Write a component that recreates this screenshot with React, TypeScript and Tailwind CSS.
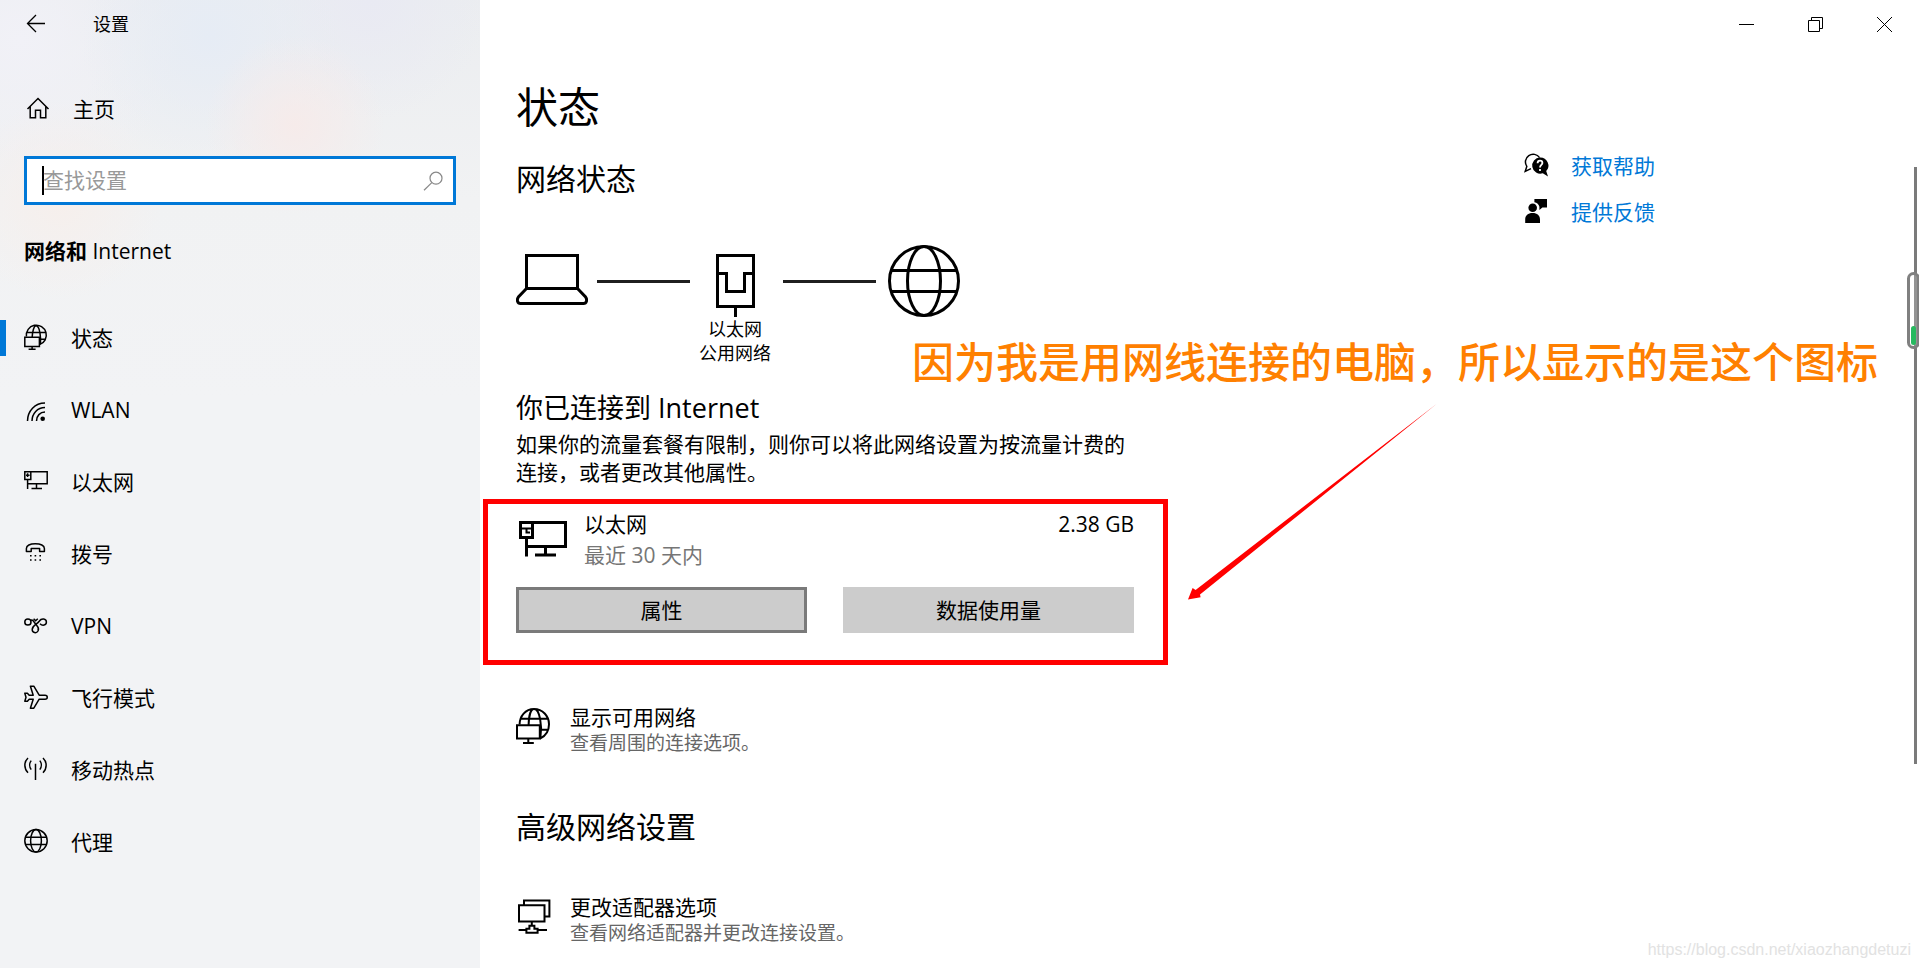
import React from 'react';

interface IconProps {
  className?: string;
}

const stroke = { fill: 'none', stroke: 'currentColor', strokeWidth: 1.5 } as const;

const BackIcon: React.FC<IconProps> = ({ className }) => (
  <svg viewBox="0 0 20 20" className={className} {...stroke} strokeWidth={1.3}>
    <path d="M19 9.5H1.5M10 1L1.5 9.5L10 18" />
  </svg>
);

const HomeIcon: React.FC<IconProps> = ({ className }) => (
  <svg viewBox="0 0 24 24" className={className} {...stroke}>
    <path d="M1.5 12L12 1.5L22.5 12M4.2 9.5V20.8H9.5V13.2H14.5V20.8H19.8V9.5" />
  </svg>
);

const SearchIcon: React.FC<IconProps> = ({ className }) => (
  <svg viewBox="0 0 20 20" className={className} {...stroke} strokeWidth={1.2}>
    <circle cx="13" cy="7.2" r="6" />
    <path d="M8.8 11.6L1 19.2" />
  </svg>
);

const GlobeMonitorIcon: React.FC<IconProps> = ({ className }) => (
  <svg viewBox="0 0 24 24" className={className} {...stroke}>
    <path d="M2.4 10.5A10 10 0 1 1 15.6 18.6M3 6.6H21.6M16 13.3H21.8M8.2 11C8.4 6 9.8 -0.2 12 -0.2M16.4 18C17 13 16.2 -0.2 12 -0.2" />
    <path d="M0.8 11.2H15.4V20.6H0.8ZM8.1 20.6V23.2M4.6 23.2H11.6" />
  </svg>
);

const WlanIcon: React.FC<IconProps> = ({ className }) => (
  <svg viewBox="0 0 24 24" className={className} {...stroke}>
    <path d="M3.5 23C3.5 13 11 5 21 5M8 23C8 15.5 13.5 9.5 21 9.5M12.5 23C12.5 18 16 14 21 14" />
    <circle cx="18.7" cy="20.7" r="2.3" fill="currentColor" stroke="none" />
  </svg>
);

const EthernetIcon: React.FC<IconProps> = ({ className }) => (
  <svg viewBox="0 0 24 24" className={className} {...stroke}>
    <path d="M0.8 1.8H6.8V9.6H0.8ZM6.8 1.8H23.2V13.8H3.6M3.6 9.6V19M2 5.2H5.6M3.6 3.2V7M12.5 13.8V18.2M7.5 18.4H18" />
  </svg>
);

const DialIcon: React.FC<IconProps> = ({ className }) => (
  <svg viewBox="0 0 24 24" className={className} {...stroke}>
    <path
      d="M2.4 9.4V6.6C2.4 3.5 6 1.8 11.3 1.8S20.4 3.5 20.4 6.6V9.4H15.6V6.4H7.2V9.4Z"
      strokeLinejoin="round"
    />
    <path d="M6 13.7H7.6M10.6 13.7H12.2M15.4 13.7H17M6 18H7.6M10.6 18H12.2M15.4 18H17" />
  </svg>
);

const VpnIcon: React.FC<IconProps> = ({ className }) => (
  <svg viewBox="0 0 24 24" className={className} {...stroke}>
    <circle cx="3.9" cy="8" r="3.1" />
    <path d="M6.6 6.4C9 4.6 10.4 9.2 12.6 11.2C14.8 13.4 15 15 14 17C12.4 19.8 8.2 18.8 8.2 15.4C8.2 11.6 13 10.6 15.4 7C17.4 3.8 22.4 4.4 22.4 8C22.4 11.4 18.4 12.2 16 9.8" />
    <path d="M9.6 4.8L11.6 6.8L13.8 4.8" />
  </svg>
);

const AirplaneIcon: React.FC<IconProps> = ({ className }) => (
  <svg viewBox="0 0 24 24" className={className} {...stroke} strokeLinejoin="round">
    <path d="M0.8 7.2H3.4L5.2 9.2H9.2L6.4 0.2H9.8L15.2 9.2H21C24 9.2 24 13.2 21 13.2H15.2L9.8 22.2H6.4L9.2 13.2H5.2L3.4 15.2H0.8L2 11.2Z" />
  </svg>
);

const HotspotIcon: React.FC<IconProps> = ({ className }) => (
  <svg viewBox="0 0 24 24" className={className} {...stroke}>
    <path d="M11.5 5.8V22M7.2 2.6C5.2 5.2 5.2 9 7.2 11.6M15.8 2.6C17.8 5.2 17.8 9 15.8 11.6M4 0C-0.2 4 -0.2 10.6 4 14.8M19 0C23.2 4 23.2 10.6 19 14.8" />
  </svg>
);

const ProxyIcon: React.FC<IconProps> = ({ className }) => (
  <svg viewBox="0 0 24 24" className={className} {...stroke}>
    <circle cx="12" cy="10.8" r="11.2" />
    <ellipse cx="12" cy="10.8" rx="5.4" ry="11.2" />
    <path d="M1.4 7.2H22.6M1.4 14.6H22.6" />
  </svg>
);

const GlobeIcon: React.FC<IconProps> = ({ className }) => (
  <svg viewBox="0 0 72 72" className={className} {...stroke} strokeWidth={3}>
    <circle cx="36" cy="36" r="34.5" />
    <ellipse cx="36" cy="36" rx="16.5" ry="34.5" />
    <path d="M3 25.5H69M3 46.5H69" />
  </svg>
);

const LaptopIcon: React.FC<IconProps> = ({ className }) => (
  <svg viewBox="0 0 72 72" className={className} {...stroke} strokeWidth={3}>
    <path d="M10.5 43.5V10.5H61.5V43.5Z" />
    <path d="M10.5 43.5L2.4 52C0.4 55 1.5 58.5 4.5 58.5H67.5C70.5 58.5 71.6 55 69.6 52L61.5 43.5" />
  </svg>
);

const EthernetPortIcon: React.FC<IconProps> = ({ className }) => (
  <svg viewBox="0 0 72 72" className={className} {...stroke} strokeWidth={3}>
    <path d="M18.5 10.5H54.5V61.5H18.5ZM18.5 28.5H27.5V46.5H45.5V28.5H54.5M36.5 61.5V72" />
  </svg>
);

const EthernetLargeIcon: React.FC<IconProps> = ({ className }) => (
  <svg viewBox="0 0 54 40" className={className} {...stroke} strokeWidth={3}>
    <path d="M4.5 4.5H16.5V19.5H4.5ZM16.5 4.5H49.5V28.5H11M10.5 19.5V38.5M29.5 28.5V37M19 37H40" />
    <path d="M6 10.5H15M10.5 10.5V14.5H14" strokeWidth={2} />
  </svg>
);

const NetworksIcon: React.FC<IconProps> = ({ className }) => (
  <svg viewBox="0 0 36 36" className={className} {...stroke} strokeWidth={2}>
    <path d="M3.6 16.5C3.6 8 9.5 1 18 1C26.5 1 33 8 33 16.2C33 23 29.5 28 24 30.6M4.6 10.8H31.4M24.5 21.8H31.6M12.6 17C12.8 8.5 14.6 1 18 1M24.4 29.4C26.4 18 23.8 1 18 1" />
    <path d="M1 17.2H23.8V30.4H1ZM12.3 30.4V35M7 35H17.8" />
  </svg>
);

const AdapterIcon: React.FC<IconProps> = ({ className }) => (
  <svg viewBox="0 0 36 36" className={className} {...stroke} strokeWidth={2}>
    <path d="M3 7.2H28.5V23.4H3ZM8 6.8V2.6H33.4V18.6H29M15.8 23.4V27M2.6 32H10M22 32H31" />
    <path d="M10.4 30.8H13.4V27.8H18.4V30.8H21.6V34.8H10.4Z" />
  </svg>
);

const HelpIcon: React.FC<IconProps> = ({ className }) => (
  <svg viewBox="0 0 24 24" className={className}>
    <path d="M15.6 5.6A7.6 7.6 0 1 0 2.8 14.4L1.2 19.4L7 16.6" {...stroke} />
    <path d="M16 5.4A8.1 8.1 0 1 0 18.8 21.2L24 24.4L22.2 19A8.1 8.1 0 0 0 16 5.4Z" fill="currentColor" />
    <path d="M13.6 11.2C13.6 7.8 18.4 8 18.4 11C18.4 12.8 16 13 16 15.4M16 17V19" {...stroke} stroke="#fff" strokeWidth={1.8} />
  </svg>
);

const FeedbackIcon: React.FC<IconProps> = ({ className }) => (
  <svg viewBox="0 0 24 24" className={className} fill="currentColor">
    <circle cx="8.7" cy="9.7" r="4.3" />
    <path d="M1.2 25V21.4C1.2 17.6 4 15 8.6 15S16 17.6 16 21.4V25ZM10.4 1H23V9.4H18.4L15.4 12V8.8C15 6.4 13 4.6 10.4 4.2Z" />
  </svg>
);

interface NavItem {
  label: string;
  icon: React.FC<IconProps>;
  active?: boolean;
}

const navItems: NavItem[] = [
  { label: '状态', icon: GlobeMonitorIcon, active: true },
  { label: 'WLAN', icon: WlanIcon },
  { label: '以太网', icon: EthernetIcon },
  { label: '拨号', icon: DialIcon },
  { label: 'VPN', icon: VpnIcon },
  { label: '飞行模式', icon: AirplaneIcon },
  { label: '移动热点', icon: HotspotIcon },
  { label: '代理', icon: ProxyIcon },
];

const Sidebar: React.FC = () => (
  <aside className="w-[480px] shrink-0 bg-[#f2f3f5] bg-[radial-gradient(circle_at_295px_125px,#f6ebea_0,transparent_90px),radial-gradient(circle_at_210px_35px,#e6ecf5_0,transparent_130px),radial-gradient(circle_at_60px_200px,#f6efec_0,transparent_100px),radial-gradient(circle_at_370px_0,#e9eaf3_0,transparent_120px),radial-gradient(circle_at_20px_40px,#f1f1f7_0,transparent_160px),linear-gradient(to_bottom,#ebedf0_0,#f1f2f3_200px,#f2f3f5_400px)]">
    <header className="flex h-12 items-center pl-[26px]">
      <button aria-label="返回">
        <BackIcon className="size-5" />
      </button>
      <span className="ml-[47px] text-lg leading-6">设置</span>
    </header>
    <a href="#home" className="mt-[37px] flex h-12 items-center gap-[23px] pl-[26px]">
      <HomeIcon className="size-6" />
      <span>主页</span>
    </a>
    <label className="mx-6 mt-[23px] flex h-[49px] items-center border-3 border-[#0078d7] bg-white pr-2.5 pl-[15px]">
      <span className="h-[29px] w-0.5 bg-black" />
      <input
        type="text"
        aria-label="查找设置"
        placeholder="查找设置"
        className="-ml-px min-w-0 flex-1 bg-transparent pb-0.5 outline-none placeholder:text-[#999]"
      />
      <SearchIcon className="size-5 text-[#888]" />
    </label>
    <h2 className="mt-8 pl-6 font-bold">
      网络和 <span className="font-medium">Internet</span>
    </h2>
    <nav className="mt-[37px] flex flex-col">
      {navItems.map(({ label, icon: Icon, active }) => (
        <a key={label} href={`#${label}`} className="flex h-[72px] items-center">
          <span className={active ? 'h-9 w-1.5 bg-[#0078d7]' : 'h-9 w-1.5'} />
          <Icon className="ml-[18px] size-6 overflow-visible" />
          <span className="ml-[23px]">{label}</span>
        </a>
      ))}
    </nav>
  </aside>
);

const WindowControls: React.FC = () => (
  <div className="flex h-12 justify-end">
    <button aria-label="最小化" className="flex w-[69px] items-center justify-center">
      <svg viewBox="0 0 15 15" className="size-[15px]" stroke="#000">
        <path d="M0 7.5H15" />
      </svg>
    </button>
    <button aria-label="还原" className="flex w-[69px] items-center justify-center">
      <svg viewBox="0 0 15 15" className="size-[15px]" fill="none" stroke="#000">
        <path d="M0.5 3.5H11.5V14.5H0.5ZM3.5 3.5V0.5H14.5V11.5H11.5" />
      </svg>
    </button>
    <button aria-label="关闭" className="flex w-[69px] items-center justify-center">
      <svg viewBox="0 0 15 15" className="size-[15px]" stroke="#000">
        <path d="M0 0L15 15M15 0L0 15" />
      </svg>
    </button>
  </div>
);

const NetworkDiagram: React.FC = () => (
  <div className="mt-[46px] flex items-start">
    <LaptopIcon className="size-[72px]" />
    <div className="mt-[35px] ml-[9px] h-[3px] w-[93px] bg-[#1f1f1f]" />
    <div className="ml-[9px] flex flex-col items-center text-lg leading-6">
      <EthernetPortIcon className="size-[72px]" />
      <span>以太网</span>
      <span>公用网络</span>
    </div>
    <div className="mt-[35px] ml-3 h-[3px] w-[93px] bg-[#1f1f1f]" />
    <GlobeIcon className="ml-3 size-[72px]" />
  </div>
);

interface SettingLinkProps {
  icon: React.FC<IconProps>;
  title: string;
  description: string;
}

const SettingLink: React.FC<SettingLinkProps> = ({ icon: Icon, title, description }) => (
  <a href={`#${title}`} className="flex items-start gap-[18px]">
    <Icon className="mt-[5px] size-9" />
    <span className="flex flex-col">
      <span>{title}</span>
      <span className="text-[19px] leading-6 text-[#666]">{description}</span>
    </span>
  </a>
);

const Usage: React.FC = () => (
  <section className="relative mt-6">
    <div className="flex">
      <EthernetLargeIcon className="mt-2 h-10 w-[54px]" />
      <div className="ml-3.5 flex flex-1 flex-col gap-[3px]">
        <div className="flex justify-between">
          <span>以太网</span>
          <span>2.38 GB</span>
        </div>
        <span className="text-[#767676]">最近 30 天内</span>
      </div>
    </div>
    <div className="mt-[18px] grid grid-cols-2 gap-9">
      <button className="h-[46px] border-3 border-[#7a7a7a] bg-[#ccc]">属性</button>
      <button className="h-[46px] bg-[#ccc]">数据使用量</button>
    </div>
    <div className="pointer-events-none absolute -top-[11px] -right-[34px] -bottom-8 -left-[33px] border-5 border-[#f00]" />
  </section>
);

export default function App() {
  return (
    <div className="flex min-h-screen bg-white font-['Open_Sans','Noto_Sans_CJK_SC',sans-serif] text-[21px] leading-7 text-black">
      <Sidebar />
      <main className="relative flex-1 overflow-hidden">
        <WindowControls />
        <div className="flex pl-9">
          <div className="w-[618px] shrink-0 pt-[31px]">
            <h1 className="text-[42px] leading-14">状态</h1>
            <h2 className="mt-6 text-3xl leading-10">网络状态</h2>
            <NetworkDiagram />
            <h3 className="mt-[25px] text-[27px] leading-9">你已连接到 Internet</h3>
            <p className="mt-1">
              如果你的流量套餐有限制，则你可以将此网络设置为按流量计费的连接，或者更改其他属性。
            </p>
            <Usage />
            <div className="mt-[70px]">
              <SettingLink icon={NetworksIcon} title="显示可用网络" description="查看周围的连接选项。" />
            </div>
            <h2 className="mt-[52px] mb-[46px] text-3xl leading-10">高级网络设置</h2>
            <SettingLink icon={AdapterIcon} title="更改适配器选项" description="查看网络适配器并更改连接设置。" />
          </div>
          <div className="ml-[390px] flex flex-col gap-[18px] pt-26 whitespace-nowrap text-[#0078d7]">
            <a href="#help" className="flex items-start gap-[23px]">
              <HelpIcon className="size-6 overflow-visible text-black" />
              获取帮助
            </a>
            <a href="#feedback" className="flex items-start gap-[23px]">
              <FeedbackIcon className="size-6 overflow-visible text-black" />
              提供反馈
            </a>
          </div>
        </div>

        {/* annotation over the page */}
        <p className="absolute top-[334px] left-[432px] text-[42px] leading-14 font-medium whitespace-nowrap text-[#ff8000]">
          因为我是用网线连接的电脑，所以显示的是这个图标
        </p>
        <svg viewBox="0 0 250 198" className="absolute top-[403px] left-[707px] h-[198px] w-[250px]" fill="#f00">
          <path d="M249.5 1L13 191.5L13.6 194.3L1 196.5L5.6 185L8.6 187Z" />
        </svg>

        {/* scrollbar and the floating meter on it */}
        <div className="absolute top-[167px] right-0.5 h-[597px] w-[3px] bg-[#7a7a7a]" />
        <div className="absolute top-[272px] -right-px flex h-[77px] w-[13px] items-end justify-center rounded-full border-3 border-[#808080] bg-white/20 pb-px">
          <div className="h-[19px] w-[5px] rounded-full bg-[#27b95f]" />
        </div>
        <span className="absolute right-2 bottom-2 font-['Liberation_Sans',sans-serif] text-base leading-5 text-[#e2e2e2]">
          https://blog.csdn.net/xiaozhangdetuzi
        </span>
      </main>
    </div>
  );
}
